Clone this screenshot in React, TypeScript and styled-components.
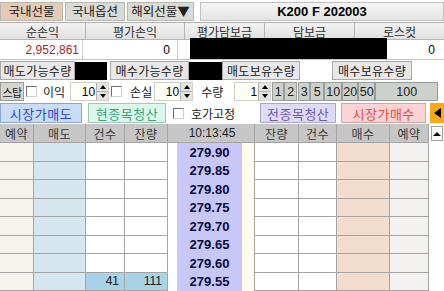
import React from 'react'
import styled, { createGlobalStyle } from 'styled-components'

const GlobalStyle = createGlobalStyle`
  html, body {
    margin: 0;
    padding: 0;
    background: #ffffff;
  }
  body {
    font-family: 'Noto Sans CJK KR', 'Noto Sans', sans-serif;
    font-size: 12px;
    color: #000;
  }
`

const Panel = styled.div`
  position: relative;
  width: 444px;
  height: 291px;
  overflow: hidden;
  background: #fff;
  display: flex;
  flex-direction: column;
`

/* ---------- top bar ---------- */

const TopBar = styled.div`
  height: 22px;
  display: flex;
  align-items: center;
  gap: 2px;
`

const Tab = styled.div<{ $active?: boolean; $w: number }>`
  width: ${p => p.$w}px;
  flex-shrink: 0;
  height: 19px;
  box-sizing: border-box;
  display: flex;
  align-items: center;
  justify-content: center;
  border: 1px solid #b8b8b0;
  background: ${p => (p.$active ? '#e8cab4' : '#d9dcd6')};
  color: #202020;
  font-size: 12.5px;
  line-height: 1;
  white-space: nowrap;
`

const TitleBox = styled.div`
  flex: 1;
  margin-left: 4px;
  height: 19px;
  box-sizing: border-box;
  display: flex;
  align-items: center;
  justify-content: center;
  border: 1px solid #c0c0c0;
  background: linear-gradient(#f4f4f4, #e4e4e4);
  font-family: 'Liberation Sans', sans-serif;
  font-weight: bold;
  font-size: 13px;
`

/* ---------- summary ---------- */

const SummaryGrid = styled.div`
  display: grid;
  grid-template-columns: 86px 99px 80px 90px 89px;
  border-top: 1px solid #b0b0b0;
`

const SumHead = styled.div`
  height: 16px;
  display: flex;
  align-items: center;
  justify-content: center;
  background: linear-gradient(#f2f2f2, #e0e0e0);
  border-right: 1px solid #b4b4b4;
  border-bottom: 1px solid #b4b4b4;
  font-size: 12px;
  color: #303030;
  &:last-child {
    border-right: none;
  }
`

const ValueRow = styled.div`
  display: grid;
  grid-template-columns: 83px 95px 177px 89px;
  height: 19px;
  border-bottom: 1px solid #c4c4c4;
`

const SumValue = styled.div<{ $loss?: boolean; $pad: number }>`
  display: flex;
  align-items: center;
  justify-content: flex-end;
  padding-right: ${p => p.$pad}px;
  border-right: 1px solid #d0d0d0;
  font-family: 'Liberation Sans', sans-serif;
  font-size: 12px;
  color: ${p => (p.$loss ? '#a02828' : '#000')};
  &:last-child {
    border-right: none;
  }
`

const Redaction = styled.div<{ $left: number; $top: number; $w: number; $h: number }>`
  position: absolute;
  left: ${p => p.$left}px;
  top: ${p => p.$top}px;
  width: ${p => p.$w}px;
  height: ${p => p.$h}px;
  background: #000;
`

/* ---------- quantity row ---------- */

const QtyRow = styled.div`
  height: 21px;
  display: flex;
  align-items: center;
`

const QtyLabel = styled.div<{ $w: number; $ml?: number }>`
  width: ${p => p.$w}px;
  margin-left: ${p => p.$ml ?? 0}px;
  flex-shrink: 0;
  height: 19px;
  box-sizing: border-box;
  display: flex;
  align-items: center;
  justify-content: center;
  border: 1px solid #a8a8a8;
  background: #e8e8e8;
  font-size: 12px;
  letter-spacing: 0.3px;
  color: #202020;
  white-space: nowrap;
`

const QtyValue = styled.div<{ $w: number; $redacted?: boolean }>`
  width: ${p => p.$w}px;
  flex-shrink: 0;
  height: 18px;
  background: ${p => (p.$redacted ? '#000' : '#fff')};
`

/* ---------- stop row ---------- */

const StopRow = styled.div`
  height: 21px;
  display: flex;
  align-items: center;
  overflow: hidden;
  & > * {
    flex-shrink: 0;
  }
`

const GreyButton = styled.div<{ $w: number; $ml?: number }>`
  width: ${p => p.$w}px;
  margin-left: ${p => p.$ml ?? 0}px;
  height: 19px;
  box-sizing: border-box;
  display: flex;
  align-items: center;
  justify-content: center;
  border: 1px solid #989c98;
  background: #cdd1cc;
  font-family: 'Liberation Sans', sans-serif;
  font-size: 12.5px;
  color: #202020;
  white-space: nowrap;
`

const StopButton = styled(GreyButton)`
  font-family: 'Noto Sans CJK KR', sans-serif;
  font-size: 11px;
  letter-spacing: -0.5px;
  background: #d4d4d0;
`

const CheckBox = styled.div<{ $ml: number }>`
  width: 11px;
  height: 11px;
  flex-shrink: 0;
  margin-left: ${p => p.$ml}px;
  box-sizing: border-box;
  border: 1px solid #707070;
  border-right-color: #d0d0d0;
  border-bottom-color: #d0d0d0;
  background: #fff;
`

const Caption = styled.div<{ $ml: number }>`
  margin-left: ${p => p.$ml}px;
  flex-shrink: 0;
  font-size: 12px;
  color: #202020;
  white-space: nowrap;
`

const Spin = styled.div<{ $ml: number; $w: number }>`
  margin-left: ${p => p.$ml}px;
  width: ${p => p.$w}px;
  height: 19px;
  display: flex;
  box-sizing: border-box;
  border: 1px solid #d0d0c8;
  background: #fffff8;
`

const SpinText = styled.div`
  flex: 1;
  display: flex;
  align-items: center;
  justify-content: flex-end;
  padding-right: 1px;
  font-family: 'Liberation Sans', sans-serif;
  font-size: 12px;
`

const SpinArrows = styled.div`
  width: 11px;
  display: flex;
  flex-direction: column;
  background: #e4e4e0;
  border-left: 1px solid #b0b0b0;
`

const Arrow = styled.div<{ $down?: boolean }>`
  flex: 1;
  display: flex;
  align-items: center;
  justify-content: center;
  &::before {
    content: '';
    border-left: 3px solid transparent;
    border-right: 3px solid transparent;
    ${p => (p.$down ? 'border-top: 4px solid #000;' : 'border-bottom: 4px solid #000;')}
  }
  & + & {
    border-top: 1px solid #b0b0b0;
  }
`

/* ---------- order buttons ---------- */

const ActionRow = styled.div`
  height: 22px;
  display: flex;
  align-items: center;
  & > * {
    flex-shrink: 0;
  }
`

const palette = {
  sell: { bg: '#c9dcf8', border: '#8ea4d0', fg: '#2a48c8' },
  close: { bg: '#dcf8ec', border: '#a0c8b4', fg: '#38a47a' },
  closeAll: { bg: '#dddcf4', border: '#a8a8cc', fg: '#7454b4' },
  buy: { bg: '#fcd4d4', border: '#d8a0a0', fg: '#e84a4a' },
}

const OrderButton = styled.div<{ $kind: keyof typeof palette; $w: number; $ml: number }>`
  width: ${p => p.$w}px;
  margin-left: ${p => p.$ml}px;
  height: 20px;
  box-sizing: border-box;
  display: flex;
  align-items: center;
  justify-content: center;
  background: ${p => palette[p.$kind].bg};
  border: 1px solid ${p => palette[p.$kind].border};
  color: ${p => palette[p.$kind].fg};
  font-size: 13px;
  letter-spacing: 0.5px;
`

const OrangeToggle = styled.div`
  width: 15px;
  height: 20px;
  margin-left: 4px;
  display: flex;
  align-items: center;
  justify-content: center;
  background: #f8a818;
  &::before {
    content: '';
    border-top: 5px solid transparent;
    border-bottom: 5px solid transparent;
    border-right: 7px solid #000;
  }
`

/* ---------- hoga grid ---------- */

const Board = styled.div`
  flex: 1;
  display: flex;
`

const HogaGrid = styled.div`
  width: 429px;
  display: grid;
  grid-template-columns: 34px 52px 39px 43px 87px 44px 38px 53px 39px;
  grid-template-rows: 19px repeat(8, 18.5px);
`

const HeadCell = styled.div`
  display: flex;
  align-items: center;
  justify-content: center;
  background: #c6c6c6;
  border-right: 1px solid #a4a4a4;
  border-bottom: 1px solid #a4a4a4;
  font-size: 12px;
  color: #383838;
  letter-spacing: 0.5px;
`

const TimeCell = styled(HeadCell)`
  font-family: 'Liberation Sans', sans-serif;
  letter-spacing: 0;
  color: #202020;
  padding-left: 2px;
`

const cellBg = {
  reserve: '#f6f2ee',
  sell: '#d4e6ee',
  plain: '#ffffff',
  filled: '#a8d2e6',
  buy: '#f2dccb',
  reserveBuy: '#f4f2f1',
}

const Cell = styled.div<{ $kind: keyof typeof cellBg }>`
  display: flex;
  align-items: center;
  justify-content: flex-end;
  padding-right: 5px;
  background: ${p => cellBg[p.$kind]};
  border-right: 1px solid #a4a4a4;
  border-bottom: 1px solid #a4a4a4;
  font-family: 'Liberation Sans', sans-serif;
  font-size: 12px;
  color: #202020;
`

const PriceCell = styled.div`
  display: flex;
  align-items: center;
  padding-left: 9px;
  background: linear-gradient(to right, #fff 0 9px, #c8c8f8 9px 74px, #fffcee 74px);
  border-right: 1px solid #a4a4a4;
`

const PriceText = styled.span`
  width: 65px;
  text-align: center;
  font-family: 'Liberation Sans', sans-serif;
  font-weight: bold;
  font-size: 13px;
  color: #08083a;
`

const ScrollBar = styled.div`
  flex: 1;
  background: #fff;
  padding: 2px 1px 0 2px;
`

const ScrollUp = styled.div`
  height: 15px;
  box-sizing: border-box;
  display: flex;
  align-items: center;
  justify-content: center;
  border: 1px solid #a0a0a0;
  background: #fafafa;
  &::before {
    content: '';
    border-left: 4px solid transparent;
    border-right: 4px solid transparent;
    border-bottom: 4px solid #000;
  }
`

const prices = ['279.90', '279.85', '279.80', '279.75', '279.70', '279.65', '279.60', '279.55']

const quickQty = [
  { label: '1', ml: 1, w: 12 },
  { label: '2', ml: 0, w: 13 },
  { label: '3', ml: 1, w: 12 },
  { label: '5', ml: 0, w: 14 },
  { label: '10', ml: 0, w: 18 },
  { label: '20', ml: 0, w: 16 },
  { label: '50', ml: 0, w: 17 },
  { label: '100', ml: 0, w: 63 },
]

const QtySpin = ({ ml, w, value }: { ml: number; w: number; value: string }) => (
  <Spin $ml={ml} $w={w}>
    <SpinText>{value}</SpinText>
    <SpinArrows>
      <Arrow />
      <Arrow $down />
    </SpinArrows>
  </Spin>
)

const App = () => {
  return (
    <Panel>
      <GlobalStyle />
      <TopBar>
        <Tab $active $w={63}>국내선물</Tab>
        <Tab $w={60}>국내옵션</Tab>
        <Tab $w={67}>해외선물▼</Tab>
        <TitleBox>K200 F 202003</TitleBox>
      </TopBar>

      <SummaryGrid>
        <SumHead>순손익</SumHead>
        <SumHead>평가손익</SumHead>
        <SumHead>평가담보금</SumHead>
        <SumHead>담보금</SumHead>
        <SumHead>로스컷</SumHead>
      </SummaryGrid>
      <ValueRow>
        <SumValue $loss $pad={3}>2,952,861</SumValue>
        <SumValue $pad={7}>0</SumValue>
        <SumValue $pad={4} />
        <SumValue $pad={9}>0</SumValue>
      </ValueRow>
      <Redaction $left={190} $top={38} $w={197} $h={21} />

      <QtyRow>
        <QtyLabel $w={75}>매도가능수량</QtyLabel>
        <QtyValue $w={32} $redacted />
        <QtyLabel $w={79} $ml={3}>매수가능수량</QtyLabel>
        <QtyValue $w={33} $redacted />
        <QtyLabel $w={78}>매도보유수량</QtyLabel>
        <QtyValue $w={32} />
        <QtyLabel $w={80}>매수보유수량</QtyLabel>
        <QtyValue $w={32} />
      </QtyRow>

      <StopRow>
        <StopButton $w={24}>스탑</StopButton>
        <CheckBox $ml={2} />
        <Caption $ml={6}>이익</Caption>
        <QtySpin ml={5} w={39} value="10" />
        <CheckBox $ml={2} />
        <Caption $ml={8}>손실</Caption>
        <QtySpin ml={2} w={39} value="10" />
        <Caption $ml={8}>수량</Caption>
        <QtySpin ml={11} w={37} value="1" />
        {quickQty.map(q => (
          <GreyButton key={q.label} $w={q.w} $ml={q.ml}>
            {q.label}
          </GreyButton>
        ))}
      </StopRow>

      <ActionRow>
        <OrderButton $kind="sell" $w={82} $ml={0}>시장가매도</OrderButton>
        <OrderButton $kind="close" $w={78} $ml={6}>현종목청산</OrderButton>
        <CheckBox $ml={7} />
        <Caption $ml={7}>호가고정</Caption>
        <OrderButton $kind="closeAll" $w={76} $ml={25}>전종목청산</OrderButton>
        <OrderButton $kind="buy" $w={85} $ml={5}>시장가매수</OrderButton>
        <OrangeToggle />
      </ActionRow>

      <Board>
        <HogaGrid>
          <HeadCell>예약</HeadCell>
          <HeadCell>매도</HeadCell>
          <HeadCell>건수</HeadCell>
          <HeadCell>잔량</HeadCell>
          <TimeCell>10:13:45</TimeCell>
          <HeadCell>잔량</HeadCell>
          <HeadCell>건수</HeadCell>
          <HeadCell>매수</HeadCell>
          <HeadCell>예약</HeadCell>
          {prices.map((price, i) => {
            const last = i === prices.length - 1
            return (
              <React.Fragment key={price}>
                <Cell $kind="reserve" />
                <Cell $kind="sell" />
                <Cell $kind={last ? 'filled' : 'plain'}>{last ? '41' : ''}</Cell>
                <Cell $kind={last ? 'filled' : 'plain'}>{last ? '111' : ''}</Cell>
                <PriceCell>
                  <PriceText>{price}</PriceText>
                </PriceCell>
                <Cell $kind="plain" />
                <Cell $kind="plain" />
                <Cell $kind="buy" />
                <Cell $kind="reserveBuy" />
              </React.Fragment>
            )
          })}
        </HogaGrid>
        <ScrollBar>
          <ScrollUp />
        </ScrollBar>
      </Board>
    </Panel>
  )
}

export default App
